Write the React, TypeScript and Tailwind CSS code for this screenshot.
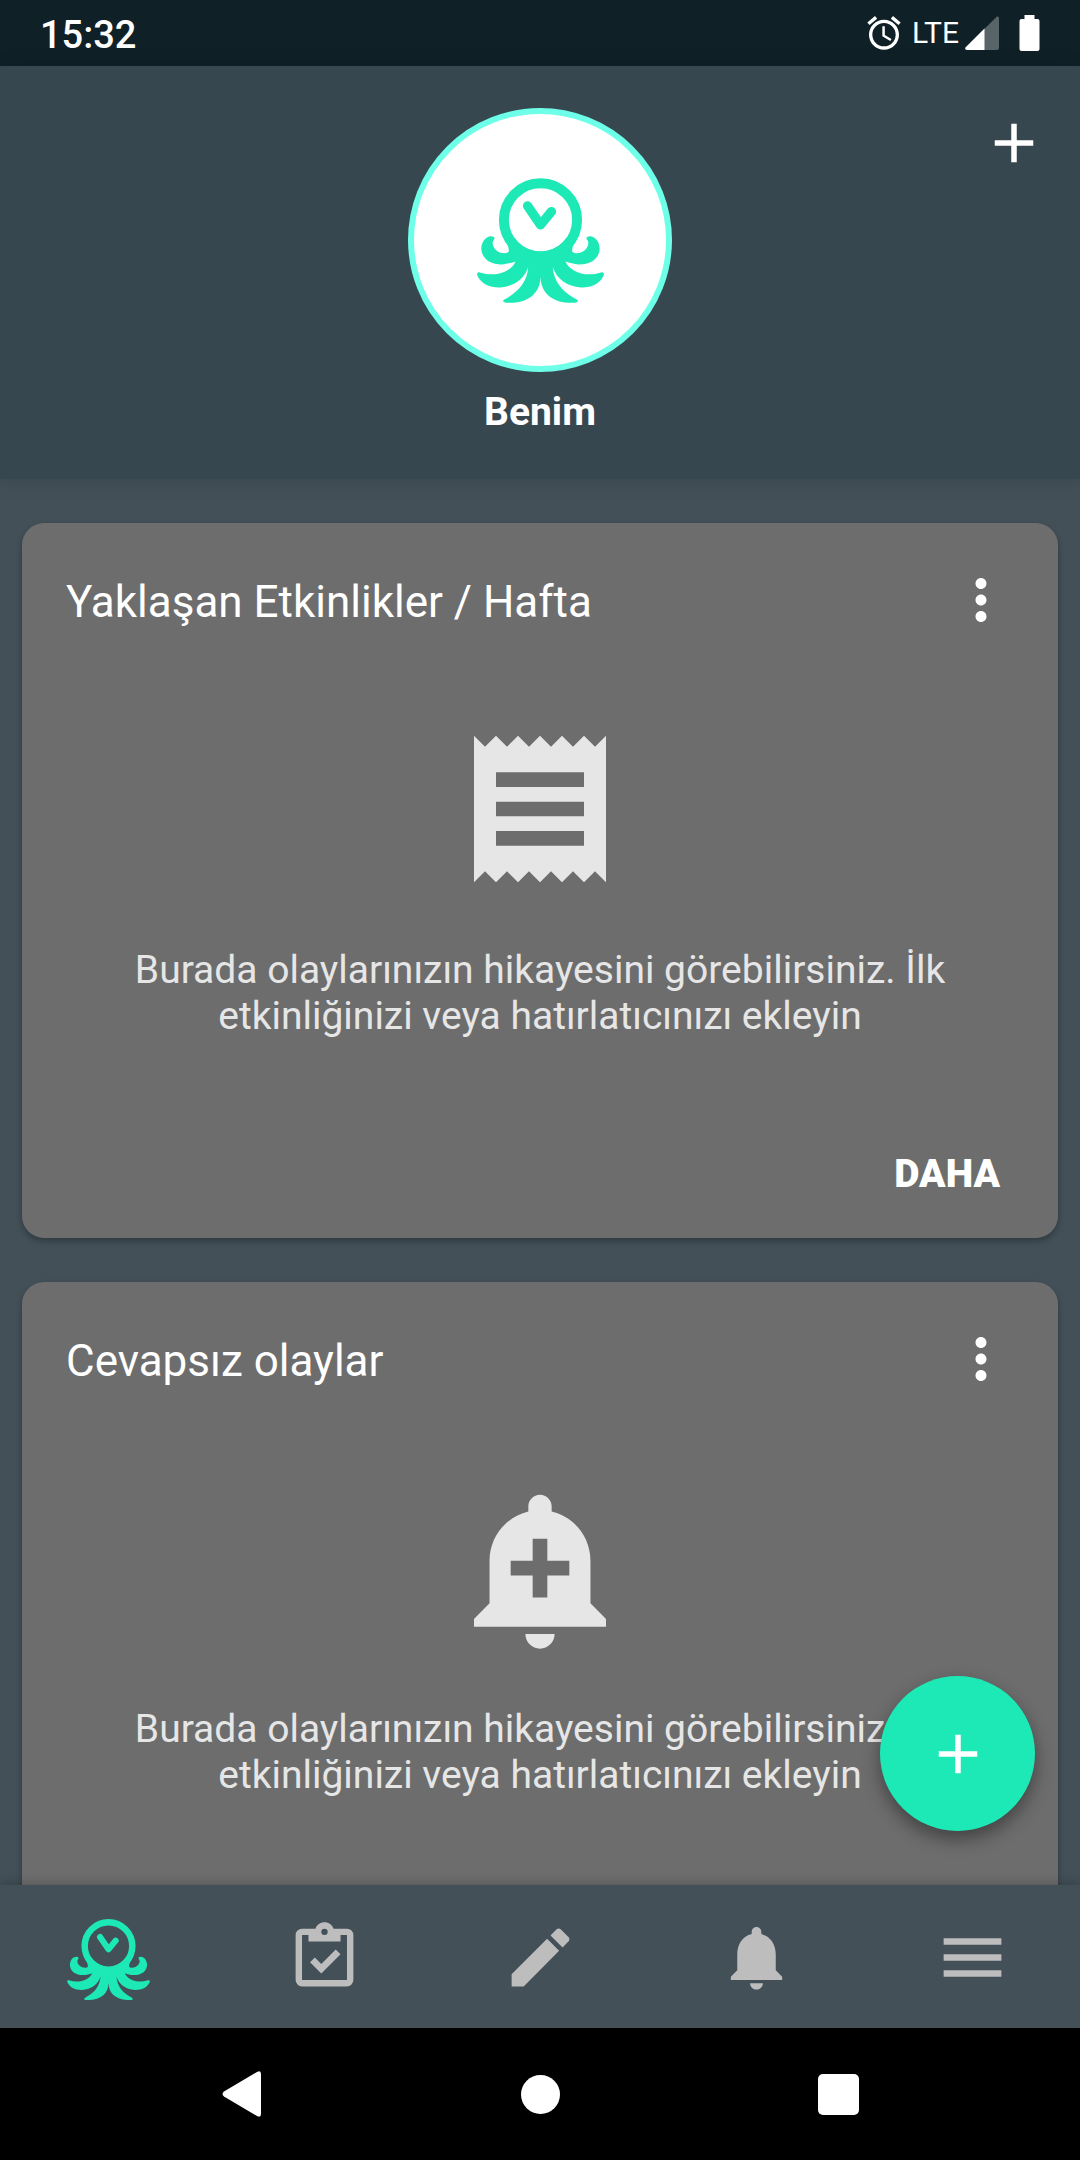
import type { ReactNode } from 'react'

type CardData = {
  id: string
  title: string
  icon: string
}

const EMPTY_TEXT = 'Burada olaylarınızın hikayesini görebilirsiniz. İlk etkinliğinizi veya hatırlatıcınızı ekleyin'

const ICONS = {
  alarm:
    'M22 5.72l-4.6-3.86-1.29 1.53 4.6 3.86L22 5.72zM7.88 3.39L6.6 1.86 2 5.71l1.29 1.53 4.59-3.85zM12.5 8H11v6l4.75 2.85.75-1.23-4-2.37V8zM12 4c-4.97 0-9 4.03-9 9s4.02 9 9 9c4.97 0 9-4.03 9-9s-4.03-9-9-9zm0 16c-3.87 0-7-3.13-7-7s3.13-7 7-7 7 3.13 7 7-3.13 7-7 7z',
  plus: 'M19 13h-6v6h-2v-6H5v-2h6V5h2v6h6v2z',
  more: 'M12 8c1.1 0 2-.9 2-2s-.9-2-2-2-2 .9-2 2 .9 2 2 2zm0 2c-1.1 0-2 .9-2 2s.9 2 2 2 2-.9 2-2-.9-2-2-2zm0 6c-1.1 0-2 .9-2 2s.9 2 2 2 2-.9 2-2-.9-2-2-2z',
  receipt:
    'M18 17H6v-2h12v2zm0-4H6v-2h12v2zm0-4H6V7h12v2zM3 22l1.5-1.5L6 22l1.5-1.5L9 22l1.5-1.5L12 22l1.5-1.5L15 22l1.5-1.5L18 22l1.5-1.5L21 22V2l-1.5 1.5L18 2l-1.5 1.5L15 2l-1.5 1.5L12 2l-1.5 1.5L9 2 7.5 3.5 6 2 4.5 3.5 3 2v20z',
  addAlert:
    'M10.01 21.01c0 1.1.89 1.99 1.99 1.99s1.99-.89 1.99-1.99h-3.98zm8.87-4.19V11c0-3.25-2.25-5.97-5.29-6.69v-.72C13.59 2.71 12.88 2 12 2s-1.59.71-1.59 1.59v.72C7.37 5.03 5.12 7.75 5.12 11v5.82L3 18.94V20h18v-1.06l-2.12-2.12zM16 13.01h-3v3h-2v-3H8V11h3V8h2v3h3v2.01z',
  clipboard:
    'M19 3H14.82C14.4 1.84 13.3 1 12 1C10.7 1 9.6 1.84 9.18 3H5A2 2 0 0 0 3 5V19A2 2 0 0 0 5 21H19A2 2 0 0 0 21 19V5A2 2 0 0 0 19 3M12 3A1 1 0 0 1 13 4A1 1 0 0 1 12 5A1 1 0 0 1 11 4A1 1 0 0 1 12 3M7 7H17V5H19V19H5V5H7V7M7.5 13.5L9 12L11 14L15.5 9.5L17 11L11 17L7.5 13.5Z',
  pencil:
    'M20.71 7.04C21.1 6.65 21.1 6 20.71 5.63L18.37 3.29C18 2.9 17.35 2.9 16.96 3.29L15.12 5.12L18.87 8.87M3 17.25V21H6.75L17.81 9.93L14.06 6.18L3 17.25Z',
  bell: 'M12 22c1.1 0 2-.9 2-2h-4c0 1.1.89 2 2 2zm6-6v-5c0-3.07-1.64-5.64-4.5-6.32V4c0-.83-.67-1.5-1.5-1.5s-1.5.67-1.5 1.5v.68C7.63 5.36 6 7.92 6 11v5l-2 2v1h16v-1l-2-2z',
  menu: 'M3 18h18v-2H3v2zm0-5h18v-2H3v2zm0-7v2h18V6H3z',
}

const CARDS: CardData[] = [
  { id: 'upcoming', title: 'Yaklaşan Etkinlikler / Hafta', icon: ICONS.receipt },
  { id: 'missed', title: 'Cevapsız olaylar', icon: ICONS.addAlert },
]

function Icon({ path, className }: { path: string; className: string }) {
  return (
    <svg viewBox="0 0 24 24" fill="currentColor" fillRule="evenodd" className={className} aria-hidden>
      <path d={path} />
    </svg>
  )
}

// one side of the octopus, mirrored around x=450 for the other one
const TENTACLES =
  'M340 444C350 458 354 468 355 480C355 486 350 488 342 488C322 488 307 474 306 458C306 453 308 449 311 446C314 441 308 437 301 437C284 438 272 455 272 475C273 504 299 523 335 522C350 521 362 517 375 513C362 543 316 562 268 546C259 543 257 552 262 559C273 581 299 592 328 591C370 589 403 565 413 529C411 572 386 603 344 626C334 631 336 636 348 637C409 640 448 612 450 561L452 561L452 470L370 440Z'

function Octopus({ className }: { className: string }) {
  return (
    <svg viewBox="259 263 382 374" fill="none" className={className} aria-hidden>
      <circle cx="450" cy="388" r="110" stroke="currentColor" strokeWidth="30" />
      <mask id="head" maskUnits="userSpaceOnUse" x="250" y="250" width="400" height="400">
        <rect x="250" y="250" width="400" height="400" fill="white" />
        <circle cx="450" cy="388" r="95" fill="black" />
      </mask>
      <g mask="url(#head)" fill="currentColor">
        <path d={TENTACLES} />
        <path d={TENTACLES} transform="translate(900 0) scale(-1 1)" />
      </g>
      <path
        d="M411 346L450 403L483 363"
        stroke="currentColor"
        strokeWidth="28"
        strokeLinecap="round"
        strokeLinejoin="round"
      />
    </svg>
  )
}

function StatusBar() {
  return (
    <div className="flex h-[66px] shrink-0 items-center justify-between bg-[#102027] px-10">
      <span className="pt-1 text-[38px] leading-[46px] font-medium">15:32</span>
      <div className="flex items-center">
        <Icon path={ICONS.alarm} className="size-10" />
        <span className="ml-2 text-[30px] leading-10">LTE</span>
        <svg viewBox="0 0 34 34" className="ml-1.5 size-[34px]" aria-hidden>
          <path d="M32 0.500Q34 0 34 2V32Q34 34 32 34H2Q-0.500 33.500 0.500 31.500Z" fill="#596468" />
          <path d="M19.500 12.500V34H2Q-0.500 33.500 0.500 31.500Z" fill="white" />
        </svg>
        <svg viewBox="0 0 21 36" className="ml-5 h-9 w-[21px]" aria-hidden>
          <path
            d="M5.500 0H15.500V4H18.500Q20.500 4 20.500 6V34Q20.500 36 18.500 36H2.500Q0.500 36 0.500 34V6Q0.500 4 2.500 4H5.500Z"
            fill="white"
          />
        </svg>
      </div>
    </div>
  )
}

function Header() {
  return (
    <header className="relative z-10 flex h-[413px] shrink-0 flex-col items-center bg-[#37474f] pt-[42px] shadow-[0_2px_20px_rgba(0,0,0,0.12)]">
      <div className="flex size-[264px] items-center justify-center rounded-full border-6 border-[#6effe8] bg-white text-[#1de9b6]">
        <Octopus className="h-[125px] w-[127px]" />
      </div>
      <h1 className="mt-[17px] text-[39px] leading-[46px] font-bold">Benim</h1>
      <button type="button" aria-label="Ekle" className="absolute top-11 right-[33px]">
        <Icon path={ICONS.plus} className="size-[66px]" />
      </button>
    </header>
  )
}

function EventCard({ card }: { card: CardData }) {
  return (
    <section className="flex shrink-0 flex-col rounded-[22px] bg-[#6d6d6d] px-11 pt-11 pb-8 shadow-[0_3px_6px_rgba(0,0,0,0.3)]">
      <div className="flex items-center justify-between">
        <h2 className="pt-1 text-[44px] leading-[52px]">{card.title}</h2>
        <button type="button" aria-label="Seçenekler">
          <Icon path={ICONS.more} className="size-[66px]" />
        </button>
      </div>
      <Icon path={card.icon} className="mt-[88px] size-44 self-center text-[#e6e6e6]" />
      <p className="mt-[50px] px-11 text-center text-[39px] leading-[46px] text-[#e6e6e6]">{EMPTY_TEXT}</p>
      <button type="button" className="mt-[103px] h-16 self-end px-3.5 text-[39px] leading-[46px] font-black">
        DAHA
      </button>
    </section>
  )
}

function Tab({ label, children }: { label: string; children: ReactNode }) {
  return (
    <a href="#" aria-label={label} className="flex flex-1 items-center justify-center">
      {children}
    </a>
  )
}

function TabBar() {
  return (
    <nav className="relative z-10 flex h-[143px] shrink-0 bg-[#435058] pt-0.5 text-[#bdbdbd] shadow-[0_-2px_10px_rgba(0,0,0,0.2)]">
      <Tab label="Ana sayfa">
        <Octopus className="mt-1 h-[81px] w-[83px] text-[#1de9b6]" />
      </Tab>
      <Tab label="Görevler">
        <Icon path={ICONS.clipboard} className="size-[77px]" />
      </Tab>
      <Tab label="Notlar">
        <Icon path={ICONS.pencil} className="size-[77px]" />
      </Tab>
      <Tab label="Hatırlatıcılar">
        <Icon path={ICONS.bell} className="size-[77px]" />
      </Tab>
      <Tab label="Menü">
        <Icon path={ICONS.menu} className="size-[77px]" />
      </Tab>
    </nav>
  )
}

function SystemBar() {
  const button = 'flex flex-1 items-center justify-center'
  return (
    <div className="flex h-[132px] shrink-0 bg-black px-[92px]">
      <button type="button" aria-label="Geri" className={button}>
        <svg viewBox="0 0 39 46" className="h-[46px] w-[39px]" aria-hidden>
          <path d="M35 1Q39 -1 39 3V43Q39 47 35 45L2 25.500Q-1 23 2 20.500Z" fill="white" />
        </svg>
      </button>
      <button type="button" aria-label="Ana ekran" className={button}>
        <span className="size-[39px] rounded-full bg-white" />
      </button>
      <button type="button" aria-label="Son uygulamalar" className={button}>
        <span className="size-[41px] rounded-[5px] bg-white" />
      </button>
    </div>
  )
}

export default function App() {
  return (
    <div className="flex h-screen flex-col overflow-hidden bg-[#435058] font-[Roboto,sans-serif] text-white">
      <StatusBar />
      <Header />
      <div className="relative flex min-h-0 flex-1 flex-col">
        <main className="flex min-h-0 flex-1 flex-col gap-11 overflow-y-auto px-[22px] py-11 [scrollbar-width:none]">
          {CARDS.map(card => (
            <EventCard key={card.id} card={card} />
          ))}
        </main>
        {/* Floating add button */}
        <button
          type="button"
          aria-label="Yeni etkinlik"
          className="absolute right-[45px] bottom-[54px] flex size-[155px] items-center justify-center rounded-full bg-[#1de9b6] shadow-[0_8px_18px_rgba(0,0,0,0.4)]"
        >
          <Icon path={ICONS.plus} className="size-[66px]" />
        </button>
      </div>
      <TabBar />
      <SystemBar />
    </div>
  )
}
